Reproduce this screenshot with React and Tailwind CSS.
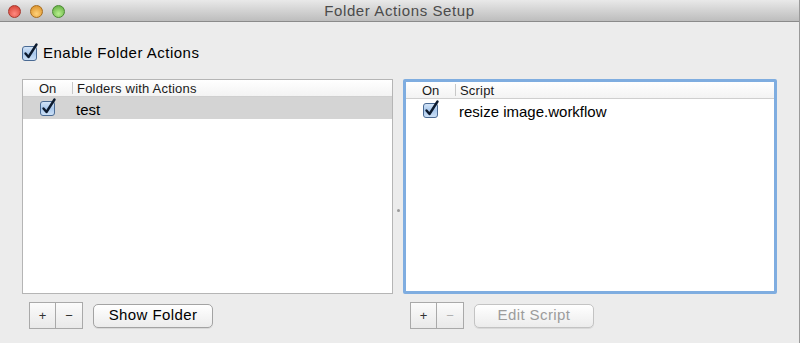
import React from "react";

const font = { fontFamily: '"Liberation Sans", Arial, sans-serif' };

function CheckBox({ size = 16 }) {
  return (
    <svg width={size} height={size} viewBox="0 0 16 16" className="overflow-visible">
      <defs>
        <linearGradient id="cbfill" x1="0" y1="0" x2="0" y2="1">
          <stop offset="0" stopColor="#d6e6f8" />
          <stop offset="0.5" stopColor="#a9c8ec" />
          <stop offset="1" stopColor="#cfe2f7" />
        </linearGradient>
      </defs>
      <rect x="0.5" y="1.5" width="14" height="14" rx="2.5" fill="url(#cbfill)" stroke="#4a6a93" />
      <path d="M3.5 8.5 L6.5 12 L14.5 -0.5" fill="none" stroke="#0c1a2e" strokeWidth="2.4" strokeLinecap="round" strokeLinejoin="round" />
    </svg>
  );
}

function Light({ from, to, border }) {
  return (
    <div
      className="w-[13px] h-[13px] rounded-full border"
      style={{ background: `radial-gradient(circle at 50% 70%, ${from}, ${to})`, borderColor: border }}
    />
  );
}

function Panel({ focused, title, rows, selected }) {
  return (
    <div
      className={
        focused
          ? "w-[374px] h-[215px] bg-white border-[3px] border-[#7fade0] rounded-[2px]"
          : "w-[371px] h-[215px] bg-white border border-[#b5b5b5]"
      }
    >
      <div className="flex h-[17px] border-b border-[#cfcfcf] bg-gradient-to-b from-white to-[#f3f3f3] text-[13px] text-[#1a1a1a] leading-[17px]">
        <div className="w-[50px] pl-[16px] border-r border-[#c8c8c8] my-[2px] leading-[13px]">On</div>
        <div className="pl-[4px] tracking-[0.2px]">{title}</div>
      </div>
      {rows.map((r) => (
        <div
          key={r}
          className={`flex items-center h-[22px] ${selected ? "bg-[#d4d4d4]" : ""}`}
        >
          <div className="w-[50px] pl-[17px] flex items-center">
            <CheckBox />
          </div>
          <div className="pl-[3px] pt-[4px] text-[15px] text-black">{r}</div>
        </div>
      ))}
    </div>
  );
}

function SegButtons({ minusDisabled }) {
  return (
    <div className="flex h-[27px] border border-[#a9a9a9] bg-gradient-to-b from-[#fbfbfb] to-[#e9e9e9] text-[13px]">
      <div className="w-[26px] flex items-center justify-center border-r border-[#a9a9a9] text-[#333]">+</div>
      <div className={`w-[26px] flex items-center justify-center ${minusDisabled ? "text-[#b0b0b0]" : "text-[#333]"}`}>−</div>
    </div>
  );
}

function PushButton({ label, disabled, width }) {
  return (
    <div
      className={`${width} h-[24px] rounded-[5px] border bg-gradient-to-b from-white to-[#ececec] flex items-center justify-center text-[15px] tracking-[0.4px] shadow-[0_1px_0_rgba(0,0,0,0.08)] ${
        disabled ? "text-[#9c9c9c] border-[#c3c3c3]" : "text-black border-[#a3a3a3]"
      }`}
    >
      {label}
    </div>
  );
}

export default function App() {
  return (
    <div className="w-[800px] h-[343px] bg-[#ececec] border-r border-[#9a9a9a] overflow-hidden" style={font}>
      {/* title bar */}
      <div className="h-[22px] grid grid-cols-[1fr_auto_1fr] items-center bg-gradient-to-b from-[#e9e9e9] to-[#bdbdbd] border-b border-[#8b8b8b]">
        <div className="flex items-center gap-[9px] pl-[8px]">
          <Light from="#ff8a80" to="#d0392b" border="#a8382d" />
          <Light from="#ffd27a" to="#d6891f" border="#a86c1c" />
          <Light from="#b8ef8e" to="#5aa83a" border="#4a8a32" />
        </div>
        <div className="text-[15px] tracking-[0.6px] text-[#4b4b4b]">Folder Actions Setup</div>
        <div />
      </div>

      {/* enable checkbox */}
      <div className="flex items-center gap-[5px] pl-[22px] pt-[19px] h-[43px]">
        <CheckBox />
        <span className="text-[15px] tracking-[0.5px] text-black">Enable Folder Actions</span>
      </div>

      {/* panels */}
      <div className="flex items-start pl-[22px] mt-[14px]">
        <div className="flex flex-col">
          <Panel title="Folders with Actions" rows={["test"]} selected />
          <div className="flex items-center gap-[10px] pl-[7px] mt-[8px]">
            <SegButtons />
            <PushButton label="Show Folder" width="w-[120px]" />
          </div>
        </div>
        <div className="flex items-center h-[215px] w-[10px] justify-center pt-[48px]">
          <div className="w-[3px] h-[3px] rounded-full bg-[#9a9a9a]" />
        </div>
        <div className="flex flex-col">
          <Panel focused title="Script" rows={["resize image.workflow"]} />
          <div className="flex items-center gap-[10px] pl-[7px] mt-[8px]">
            <SegButtons minusDisabled />
            <PushButton label="Edit Script" width="w-[120px]" disabled />
          </div>
        </div>
      </div>
    </div>
  );
}
